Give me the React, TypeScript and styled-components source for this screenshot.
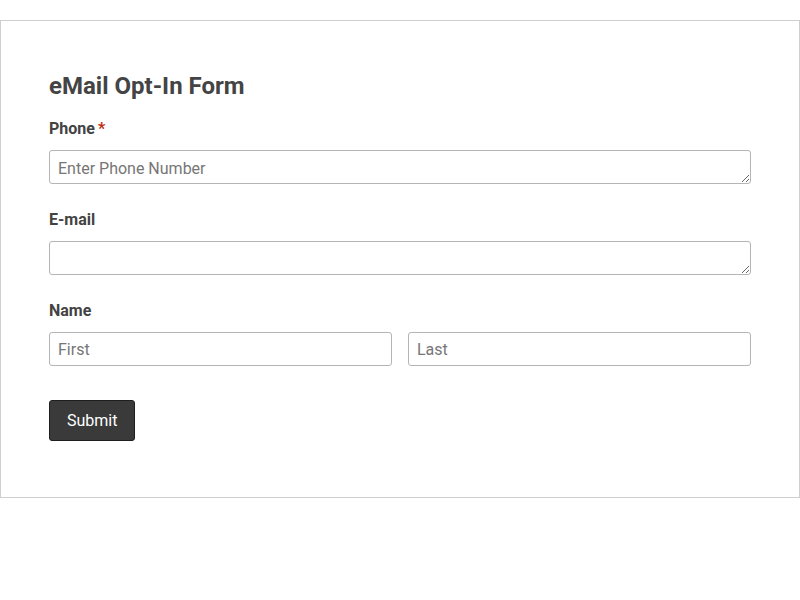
import React from "react";
import styled, { createGlobalStyle } from "styled-components";

const Global = createGlobalStyle`
  html, body { margin: 0; padding: 0; background: #fff; }
  body { font-family: Roboto, "Noto Sans", Arial, sans-serif; color: #434343; }
  * { box-sizing: border-box; }
`;

const Card = styled.form`
  margin-top: 20px;
  width: 800px;
  border: 1px solid #cfcfcf;
  padding: 51px 48px 56px 48px;
`;

const Title = styled.h2`
  margin: 0 0 17px 0;
  font-size: 24px;
  line-height: 29px;
  font-weight: 700;
  color: #444;
`;

const Field = styled.div`
  margin-bottom: 25px;
`;

const Label = styled.label`
  display: block;
  font-size: 16px;
  line-height: 20px;
  font-weight: 700;
  color: #434343;
  padding-top: 1px;
  margin-bottom: 11px;
`;

const Required = styled.span`
  color: #c02b0a;
  margin-left: 3px;
`;

const TextArea = styled.textarea`
  display: block;
  width: 100%;
  height: 34px;
  min-height: 34px;
  margin: 0;
  padding: 8px 8px 4px 8px;
  font-family: Roboto, "Noto Sans", Arial, sans-serif;
  font-size: 16px;
  line-height: 20px;
  color: #333;
  border: 1px solid #b5b5b5;
  border-radius: 3px;
  resize: vertical;
  overflow: hidden;
  &::placeholder { color: #767676; }
`;

const Row = styled.div`
  display: grid;
  grid-template-columns: 1fr 1fr;
  gap: 16px;
`;

const Input = styled.input`
  display: block;
  width: 100%;
  height: 34px;
  margin: 0;
  padding: 0 8px;
  font-family: Roboto, "Noto Sans", Arial, sans-serif;
  font-size: 16px;
  color: #333;
  border: 1px solid #b5b5b5;
  border-radius: 3px;
  &::placeholder { color: #767676; }
`;

const Footer = styled.div`
  margin-top: 34px;
`;

const Button = styled.button`
  height: 41px;
  padding: 0 17px 1px 17px;
  background: #3a3a3a;
  color: #fff;
  border: 1px solid #1e1e1e;
  border-radius: 3px;
  font-family: Roboto, "Noto Sans", Arial, sans-serif;
  font-size: 16px;
  cursor: pointer;
`;

const NameField = styled.div``;

export default function App() {
  return (
    <>
      <Global />
      <Card onSubmit={(e) => e.preventDefault()}>
        <Title>eMail Opt-In Form</Title>
        <Field>
          <Label>
            Phone<Required>*</Required>
          </Label>
          <TextArea placeholder="Enter Phone Number" />
        </Field>
        <Field>
          <Label>E-mail</Label>
          <TextArea />
        </Field>
        <NameField>
          <Label>Name</Label>
          <Row>
            <Input placeholder="First" />
            <Input placeholder="Last" />
          </Row>
        </NameField>
        <Footer>
          <Button type="submit">Submit</Button>
        </Footer>
      </Card>
    </>
  );
}
